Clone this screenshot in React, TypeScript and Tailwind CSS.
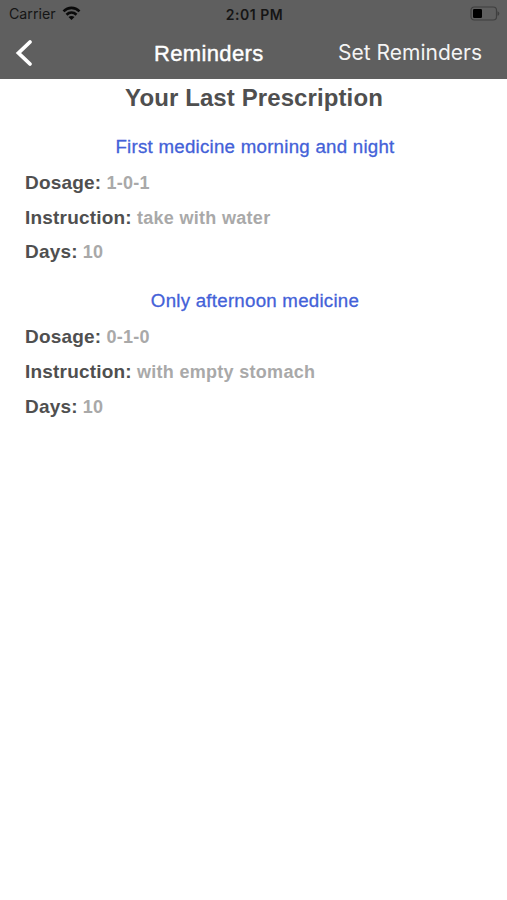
const prescriptions = [
  {
    name: "First medicine morning and night",
    dosage: "1-0-1",
    instruction: "take with water",
    days: "10",
  },
  {
    name: "Only afternoon medicine",
    dosage: "0-1-0",
    instruction: "with empty stomach",
    days: "10",
  },
]

function StatusBar() {
  return (
    <div className="grid h-[27px] grid-cols-3 items-center pl-[9px] pr-[7px] text-[#151515] font-[Inter,sans-serif]">
      <div className="flex items-center gap-[6px]">
        <span className="text-[14.2px]">Carrier</span>
        <svg width="19" height="14" viewBox="0 0 18 14" fill="none" stroke="#0a0a0a" strokeWidth="2.6">
          <path d="M1 5.3C5.6.7 12.4.7 17 5.3" />
          <path d="M4 8.7c2.9-2.8 7.1-2.8 10 0" />
          <path d="M9 14l-3-3c1.7-1.5 4.3-1.5 6 0z" fill="#0a0a0a" stroke="none" />
        </svg>
      </div>
      <span className="pt-px text-center text-[14px] tracking-[0.5px] font-semibold">2:01 PM</span>
      <svg className="justify-self-end" width="31" height="15" viewBox="0 0 31 15" fill="none">
        <rect x="2" y="1" width="25.5" height="13" rx="3.2" stroke="#3f3f3f" strokeWidth="1.2" />
        <rect x="4" y="3" width="9" height="9" rx="1.2" fill="#000" />
        <path d="M28.5 5.2c2.4.8 2.4 3.8 0 4.6z" fill="#3f3f3f" />
      </svg>
    </div>
  )
}

function Field({ label, value }: { label: string; value: string }) {
  return (
    <p className="flex h-[34.6px] items-baseline gap-[5px] leading-[35px] font-bold whitespace-nowrap">
      <span className="text-[19px] tracking-[0.2px] text-[#4f4f4f]">{label}</span>
      <span className="text-[18px] tracking-[0.3px] text-[#a9a9a9]">{value}</span>
    </p>
  )
}

export default function App() {
  return (
    <div className="h-[900px] w-[507px] overflow-hidden bg-white font-['Liberation_Sans',Arial,sans-serif]">
      <header className="h-[79px] bg-[#5f5f5f]">
        <StatusBar />
        <nav className="grid h-[52px] grid-cols-[110px_1fr_110px] items-center text-white">
          <svg className="ml-[14px]" width="20" height="28" viewBox="0 0 20 28" fill="none" stroke="currentColor" strokeWidth="3.8">
            <path d="M16 3L4.5 14 16 25" strokeLinecap="round" />
          </svg>
          <h1 className="ml-[44px] text-[22px] tracking-[0.35px] whitespace-nowrap [-webkit-text-stroke:0.4px_white]">
            Reminders
          </h1>
          <button className="justify-self-end pr-[25px] text-[21px] whitespace-nowrap text-[#f4f4f4] font-[Inter,sans-serif]">
            Set Reminders
          </button>
        </nav>
      </header>

      <main>
        <h2 className="h-[38px] pl-px text-center text-[24px] leading-[38px] font-bold tracking-[0.1px] text-[#4f4f4f]">
          Your Last Prescription
        </h2>
        {prescriptions.map((p) => (
          <section key={p.name} className="h-[154.4px] px-[25px] pt-[12px]">
            <h3 className="h-[36px] pl-[3px] text-center text-[18.7px] leading-[36px] tracking-[0.25px] text-[#4361d8] [-webkit-text-stroke:0.3px_#4361d8]">
              {p.name}
            </h3>
            <Field label="Dosage:" value={p.dosage} />
            <Field label="Instruction:" value={p.instruction} />
            <Field label="Days:" value={p.days} />
          </section>
        ))}
      </main>
    </div>
  )
}
